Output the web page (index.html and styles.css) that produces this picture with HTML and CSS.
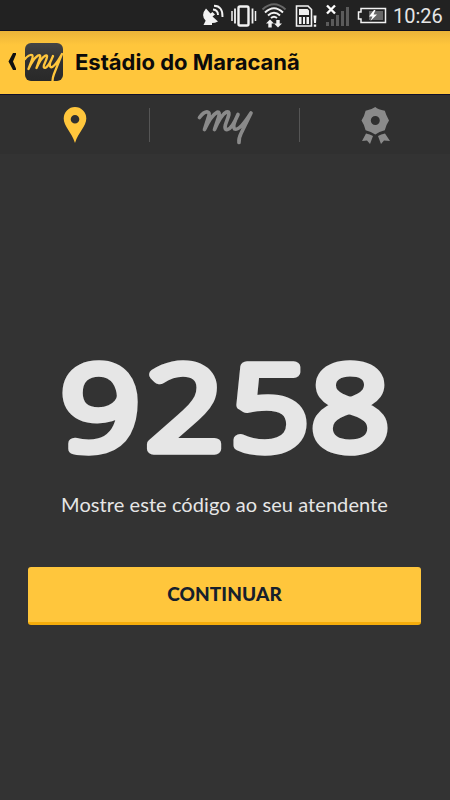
FILE: index.html
```html
<!DOCTYPE html>
<html lang="pt-BR">

<head>
    <meta charset="UTF-8">
    <meta name="viewport" content="width=device-width, initial-scale=1.0">
    <title>Estádio do Maracanã</title>
    <link rel="stylesheet" href="styles.css">
</head>

<body>
    <div class="status">
        <svg class="status-icons" width="190" height="30" viewBox="199 0 190 30">
            <!-- satellite -->
            <g fill="#f2f2f2">
                <path d="M206 8.500 Q200.500 15 205.500 20.500 Q211 25 218 21.500 L212.500 16.500 L215 14.500 L212.500 12 L210.500 13.500 Z" />
                <path d="M206 20 L203.500 25 H212 V21 Z" />
            </g>
            <g fill="none" stroke="#f2f2f2" stroke-width="1.900">
                <path d="M213 9.500 Q218 10 218 15 M214 5.800 Q223 6 222.500 17" />
            </g>
            <!-- vibrate -->
            <g fill="none" stroke="#f2f2f2">
                <rect x="238.500" y="6.500" width="10" height="19" rx="1.500" stroke-width="2.400" />
                <path d="M235 8.500 V23.500 M252.500 8.500 V23.500" stroke-width="1.800" />
                <path d="M232 11 V21 M255.500 11 V21" stroke-width="1.500" />
            </g>
            <!-- wifi -->
            <g fill="none" stroke="#f2f2f2" stroke-width="2">
                <path d="M262.500 9.500 Q274 -1 285.500 9.500" stroke="#666" />
                <path d="M265 12.500 Q274 4 283 12.500 M268 15.500 Q274 10 280 15.500 M271 18 Q274 15.500 277 18" />
            </g>
            <path d="M270 19.500 L274 23.500 H271.700 V27.500 H268.300 V23.500 H266 Z M278 27.500 L274 23.500 H276.300 V20 H279.700 V23.500 H282 Z" fill="#f2f2f2" />
            <!-- sim card -->
            <path d="M296.500 6 H308 L311.500 9.500 V26 H296.500 Z" fill="none" stroke="#f2f2f2" stroke-width="1.600" />
            <path d="M299 9 H307.500 L309 10.500 V15 H299 Z M299 17 H301.500 V24 H299 Z M303 17 H305 V24 H303 Z M306.500 17 H309 V24 H306.500 Z" fill="#f2f2f2" />
            <path d="M313.500 15.500 H316.500 L316 23 H314 Z M313.800 24.500 H316.200 V26.800 H313.800 Z" fill="#f2f2f2" />
            <!-- signal -->
            <path d="M326 22 H329 V26 H326 Z M331 19 H334 V26 H331 Z M336 15 H339 V26 H336 Z M341 11 H344 V26 H341 Z M346 7 H349 V26 H346 Z" fill="#5b5b5b" />
            <path d="M327 5.500 L335 13.500 M335 5.500 L327 13.500" stroke="#fff" stroke-width="2.400" />
            <!-- battery -->
            <path d="M361 8.500 H385.500 V22.500 H361 V19 H358.500 V12 H361 Z" fill="none" stroke="#f2f2f2" stroke-width="1.500" />
            <path d="M369 11 H383 V20 H369 Z" fill="#686868" />
            <path d="M374 10 L369 16.500 H372.500 L370.500 21 L377 14.500 H373.500 L375.500 10 Z" fill="#fff" />
        </svg>
        <span class="clock">10:26</span>
    </div>

    <div class="header">
        <svg class="back" width="10" height="18" viewBox="0 0 10 18">
            <path d="M6 0 H9 V1.500 L6 8.500 L9 15.500 V17 H6 L1.500 8.500 Z" fill="#111" />
        </svg>
        <svg class="logo" width="38" height="38" viewBox="0 0 38 38">
            <defs>
                <linearGradient id="tile" x1="0" y1="0" x2="0" y2="1">
                    <stop offset="0" stop-color="#454545" />
                    <stop offset=".5" stop-color="#303030" />
                    <stop offset="1" stop-color="#292929" />
                </linearGradient>
                <clipPath id="tile-clip">
                    <rect width="38" height="38" rx="6" />
                </clipPath>
            </defs>
            <rect width="38" height="38" rx="6" fill="url(#tile)" />
            <g clip-path="url(#tile-clip)" fill="none" stroke="#ffc63c" stroke-width="2.300" stroke-linecap="round" stroke-linejoin="round">
                <path d="M0 16 Q4 11 7 12 Q8.500 13 6.500 18 L3.500 26 Q8 16 13 12.500 Q16 11 15 15 L11.500 25 Q16 15 20.500 12.500 Q23 11.500 21.500 16 L19 22 Q18 26 21 24.500 Q24.500 22 28 13 Q23.500 22 25.500 24 Q28.500 26 37 11 L29 31 Q27.500 35 27.500 38" />
            </g>
        </svg>
        <h1 class="title">Estádio do Maracanã</h1>
    </div>

    <div class="tabs">
        <div class="tab">
            <svg width="24" height="36" viewBox="0 0 24 36">
                <path fill-rule="evenodd" d="M12 0 A11.300 11.300 0 0 1 23.300 11.500 C23.300 19 15.500 25 12 36 C8.500 25 .7 19 .7 11.500 A11.300 11.300 0 0 1 12 0 Z M12 8 A4.300 4.300 0 1 0 12 16.600 A4.300 4.300 0 1 0 12 8 Z" fill="#ffc63c" />
            </svg>
        </div>
        <div class="tab">
            <svg width="54" height="36" viewBox="198 107.500 54 36">
                <path d="M199.500 118 Q204 112 207.500 112.500 Q210.500 113 208 119 L204.500 130 Q211 116 217 112.800 Q220.500 112 218.500 118 L214.500 130 Q221 115 226.500 112.500 Q230.500 111.500 228 118 L225.500 125 Q224 130.500 227.500 130 Q232 129 238 115 Q232 127 234.500 129.500 Q239 132 251 113.500 L241 134 Q238.500 139 239 143" fill="none" stroke="#8a8a8a" stroke-width="3.700" stroke-linecap="round" stroke-linejoin="round" />
            </svg>
        </div>
        <div class="tab">
            <svg width="30" height="38" viewBox="360 107 30 38">
                <path fill-rule="evenodd" d="M375.300 107 Q378 109.500 384.800 110.800 Q386 115 389 120.500 Q386 125 384.800 130.300 Q379 131.500 375.300 134.500 Q371 131.500 365.600 130.300 Q364.500 125 361.500 120.500 Q364.500 116 365.600 110.800 Q371 110 375.300 107 Z M375.300 116 A4.500 4.500 0 1 0 375.300 125 A4.500 4.500 0 1 0 375.300 116 Z" fill="#8a8a8a" />
                <path d="M366 133.500 Q370 134 373 136 L370 144 L367 140.500 L362 141 Z M385 133.500 Q381 134 378 136 L381 144 L384 140.500 L390 141 Z" fill="#8a8a8a" />
            </svg>
        </div>
    </div>

    <div class="content">
        <svg class="code" width="340" height="170" viewBox="55 318 340 170">
            <text transform="translate(0 449) scale(1.180 1)" x="52.500 124 195.500 264" y="0">9258</text>
        </svg>
        <p class="hint">Mostre este código ao seu atendente</p>
        <button class="continue" type="button">CONTINUAR</button>
    </div>
</body>

</html>
```
FILE: styles.css
```css
* {
    box-sizing: border-box;
}

body {
    display: flex;
    flex-direction: column;
    margin: 0;
    height: 100vh;
    background: #333;
    color: #e6e6e6;
    font-family: Lato, "Open Sans", sans-serif;
    overflow: hidden;
}

.status {
    display: flex;
    flex: none;
    justify-content: flex-end;
    height: 31px;
    padding-right: 7px;
    background: #222;
    border-bottom: 1px solid #101020;
}

.status-icons {
    margin-right: 4px;
}

.clock {
    width: 50px;
    font: 20px/33px Roboto, sans-serif;
    white-space: nowrap;
}

.header {
    display: flex;
    flex: none;
    align-items: center;
    height: 64px;
    padding: 0 0 1px 7px;
    background: linear-gradient(#eab339, #ffc63c 14px);
    border-bottom: 1px solid #10102c;
}

.logo {
    margin-left: 8px;
}

.title {
    margin: 0 0 0 12px;
    color: #0b0b0b;
    font-family: Inter, sans-serif;
    font-size: 22px;
    font-weight: 700;
    line-height: 28px;
    white-space: nowrap;
}

.tabs {
    display: grid;
    flex: none;
    grid-template-columns: repeat(3, 1fr);
    height: 59px;
    padding: 13px 0;
    background: #303030;
}

.tab {
    display: flex;
    justify-content: center;
    height: 34px;
}

.tab svg {
    overflow: visible;
    margin-top: -1px;
}

.tab+.tab {
    margin-left: -1px;
    border-left: 1px solid #555;
}

.content {
    display: flex;
    flex-direction: column;
    align-items: center;
    padding: 164px 29px 0 28px;
}

.code {
    flex: none;
    overflow: visible;
}

.code text {
    fill: #e6e6e6;
    stroke: #e6e6e6;
    stroke-width: 11.5px;
    stroke-linejoin: round;
    font-family: "Open Sans", sans-serif;
    font-size: 115px;
    font-weight: 300;
}

.hint {
    margin: 3px 0 0;
    font-size: 20px;
    line-height: 26px;
    letter-spacing: .07px;
    white-space: nowrap;
}

.continue {
    width: 100%;
    height: 58px;
    margin-top: 50px;
    padding: 0 0 2px;
    background: #ffc63c;
    border: none;
    border-bottom: 3px solid #f5ad0c;
    border-radius: 3px;
    color: #16202c;
    font: 900 19px Lato, sans-serif;
    letter-spacing: .1px;
}
```
